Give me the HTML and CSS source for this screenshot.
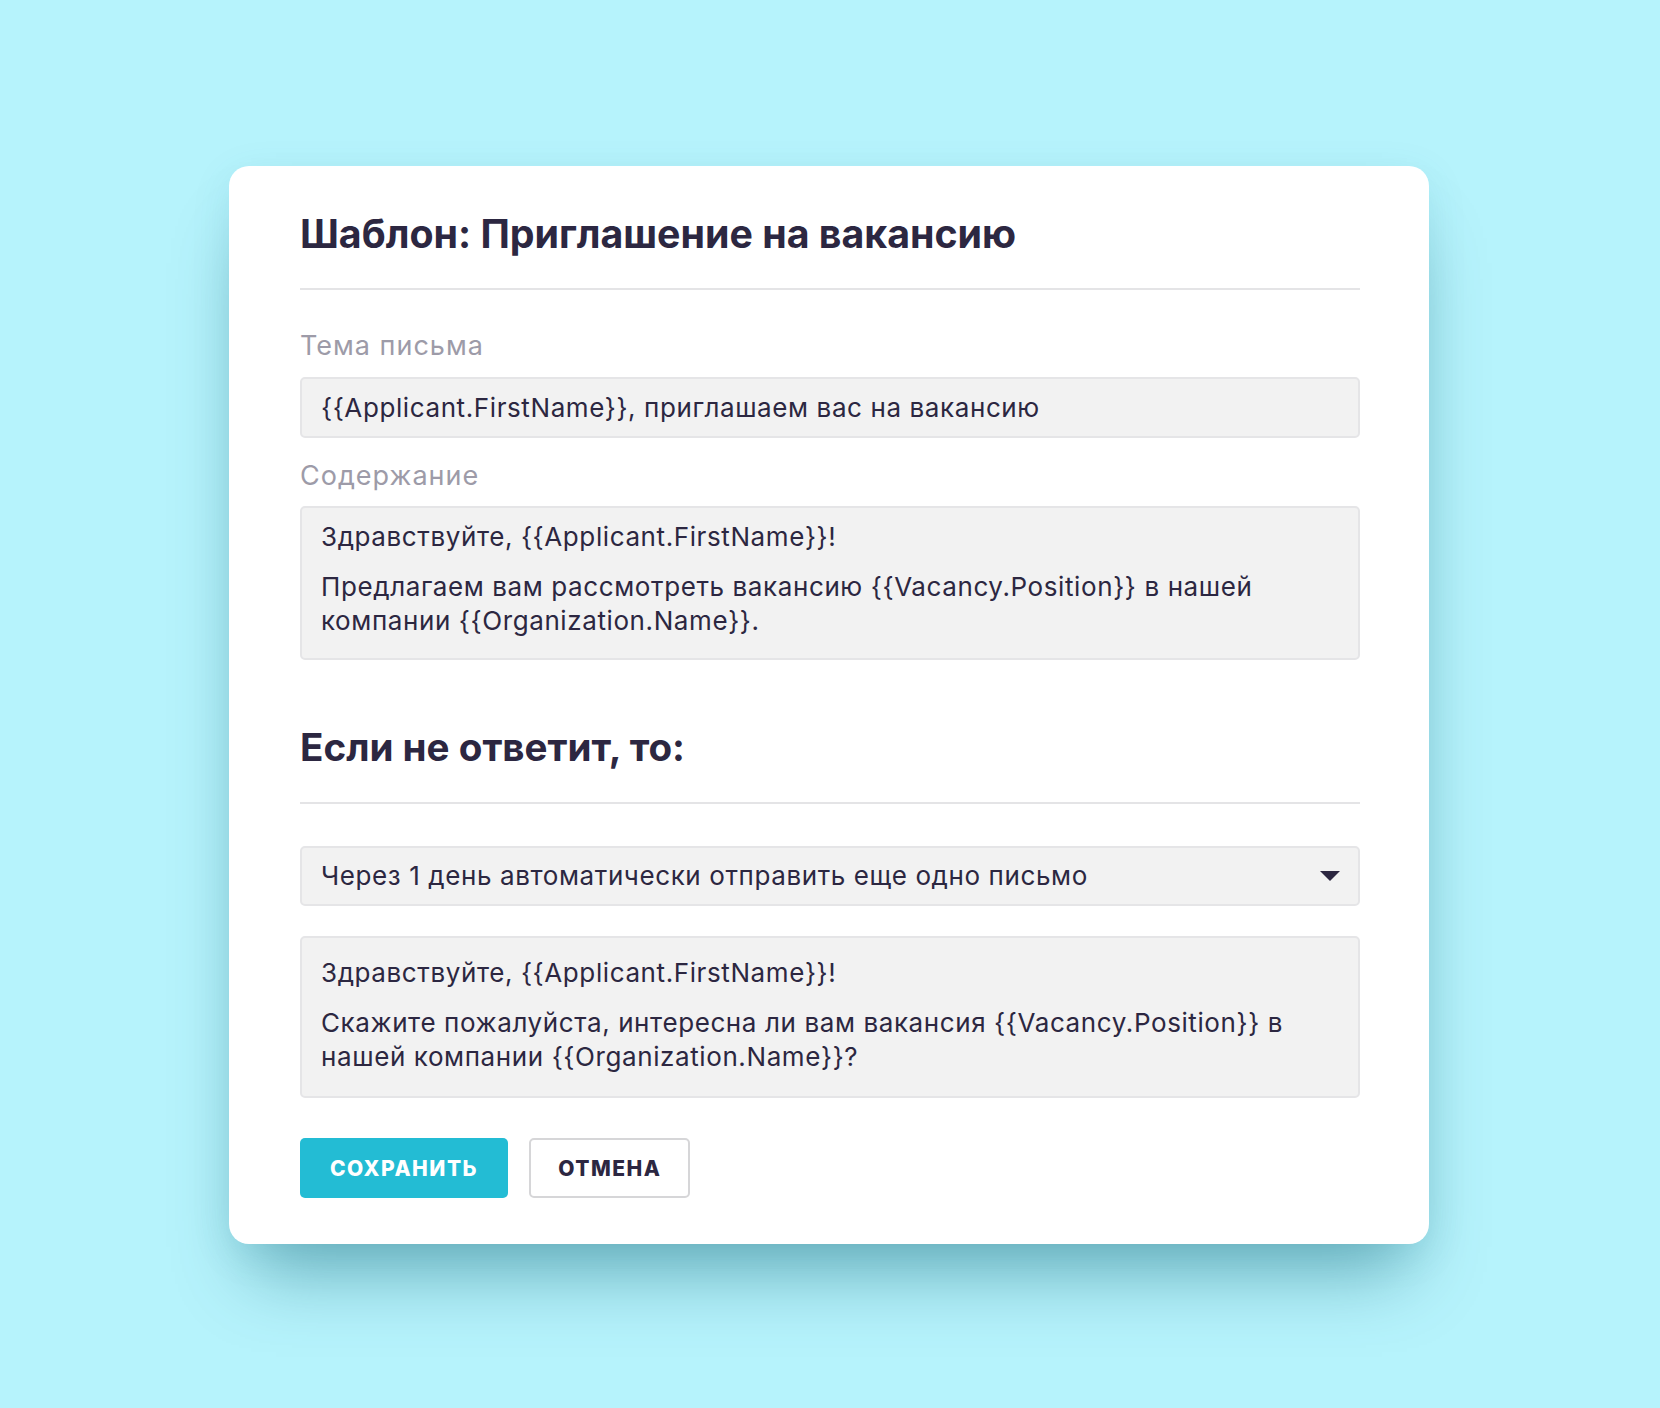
FILE: index.html
```html
<!DOCTYPE html>
<html lang="ru">
<head>
<meta charset="utf-8">
<title>Шаблон: Приглашение на вакансию</title>
<link rel="stylesheet" href="styles.css">
</head>
<body>
<main class="page">
  <section class="card">
    <h1 class="title">Шаблон: Приглашение на вакансию</h1>
    <div class="divider"></div>

    <div class="label label--first">Тема письма</div>
    <div class="field field--input">{{Applicant.FirstName}}, приглашаем вас на вакансию</div>

    <div class="label">Содержание</div>
    <div class="field field--area">
      <p class="para">Здравствуйте, {{Applicant.FirstName}}!</p>
      <p class="para">Предлагаем вам рассмотреть вакансию {{Vacancy.Position}} в нашей<br>компании {{Organization.Name}}.</p>
    </div>

    <h2 class="title title--section">Если не ответит, то:</h2>
    <div class="divider divider--section"></div>

    <div class="field field--select">
      <span class="select-text">Через 1 день автоматически отправить еще одно письмо</span>
      <svg class="caret" width="20" height="10" viewBox="0 0 20 10" aria-hidden="true"><polygon points="0,0 20,0 10,10" fill="#2c2741"/></svg>
    </div>

    <div class="field field--area field--area-lg">
      <p class="para">Здравствуйте, {{Applicant.FirstName}}!</p>
      <p class="para">Скажите пожалуйста, интересна ли вам вакансия {{Vacancy.Position}} в<br>нашей компании {{Organization.Name}}?</p>
    </div>

    <div class="actions">
      <button class="btn btn--primary" type="button">Сохранить</button>
      <button class="btn btn--ghost" type="button">Отмена</button>
    </div>
  </section>
</main>
</body>
</html>
```

FILE: styles.css
```css
* { box-sizing: border-box; }

html, body {
  margin: 0;
  padding: 0;
}

body {
  background: #b6f3fc;
  font-family: Inter, "Noto Sans", "DejaVu Sans", sans-serif;
  color: #2c2741;
  min-height: 1408px;
}

.page {
  display: flex;
  flex-direction: column;
  align-items: center;
  padding: 166px 2px 0 0;
}

.card {
  width: 1200px;
  background: #ffffff;
  border-radius: 20px;
  padding: 44px 69px 46px 71px;
  display: flex;
  flex-direction: column;
  box-shadow: 0 50px 70px -22px rgba(0, 85, 105, 0.42), 0 10px 40px rgba(0, 120, 140, 0.10);
}

.title {
  margin: 0;
  font-size: 39.3px;
  line-height: 48px;
  font-weight: 700;
  letter-spacing: 0;
  color: #2c2741;
}

.title--section {
  margin-top: 63px;
  font-size: 38.6px;
}

.divider {
  height: 2px;
  background: #e4e4e6;
  margin-top: 30px;
}

.divider--section {
  margin-top: 30.5px;
}

.label {
  font-size: 27px;
  line-height: 32px;
  letter-spacing: 1px;
  color: #9d9ba8;
  margin-top: 22px;
}

.label--first {
  margin-top: 40px;
}

.field {
  background: #f2f2f2;
  border: 2px solid #e5e5e7;
  border-radius: 5px;
  font-size: 26px;
  line-height: 34px;
  letter-spacing: 0.6px;
  color: #2c2741;
  padding: 0 19px;
}

.label + .field {
  margin-top: 14px;
}

.label--first + .field {
  margin-top: 15px;
}

.field--input {
  height: 61px;
  display: flex;
  align-items: center;
}

.field--area {
  padding-top: 12px;
  padding-bottom: 20px;
}

.field--area-lg {
  margin-top: 30px;
  padding-top: 18px;
  padding-bottom: 22px;
}

.para {
  margin: 0;
  white-space: nowrap;
}

.para + .para {
  margin-top: 16px;
}

.field--select {
  margin-top: 42px;
  height: 60px;
  display: flex;
  align-items: center;
  justify-content: space-between;
  padding-right: 18px;
}

.caret {
  display: block;
  flex: none;
}

.actions {
  display: flex;
  gap: 21px;
  margin-top: 40.5px;
}

.btn {
  height: 60px;
  padding: 0 30px;
  border-radius: 5px;
  font-family: Inter, "Noto Sans", sans-serif;
  font-size: 21px;
  font-weight: 800;
  letter-spacing: 1.5px;
  text-transform: uppercase;
  cursor: pointer;
}

.btn--primary {
  background: #23bcd4;
  border: none;
  color: #ffffff;
}

.btn--ghost {
  background: #ffffff;
  border: 2px solid #d6d6d8;
  color: #2c2741;
  padding: 0 27px;
}
```
